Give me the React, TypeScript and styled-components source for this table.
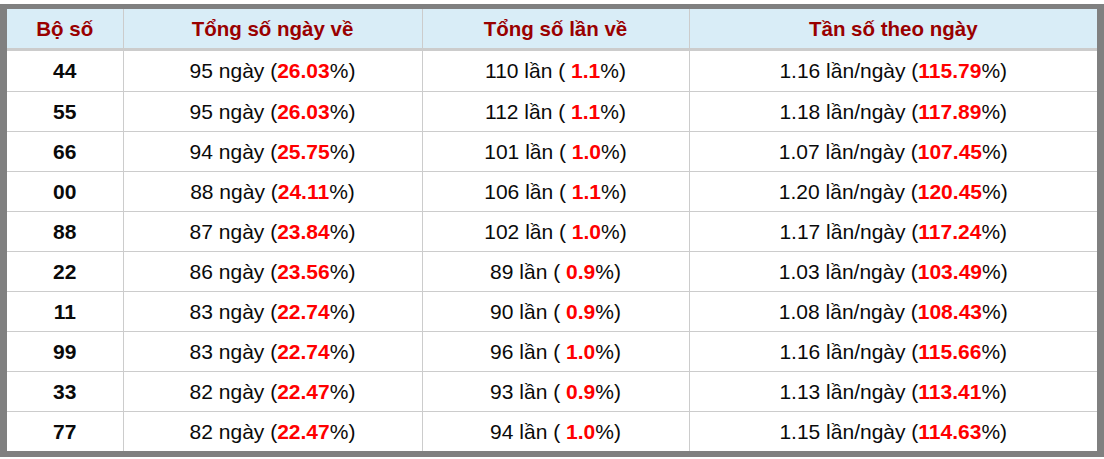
import React from "react";
import styled, { createGlobalStyle } from "styled-components";

const GlobalStyle = createGlobalStyle`
  html, body {
    margin: 0;
    padding: 0;
    background: #fff;
  }
  body {
    font-family: "Liberation Sans", Arial, sans-serif;
  }
`;

type Row = {
  bo: string;
  days: number;
  daysPct: string;
  times: number;
  timesPct: string;
  freq: string;
  freqPct: string;
};

const rows: Row[] = [
  { bo: "44", days: 95, daysPct: "26.03", times: 110, timesPct: "1.1", freq: "1.16", freqPct: "115.79" },
  { bo: "55", days: 95, daysPct: "26.03", times: 112, timesPct: "1.1", freq: "1.18", freqPct: "117.89" },
  { bo: "66", days: 94, daysPct: "25.75", times: 101, timesPct: "1.0", freq: "1.07", freqPct: "107.45" },
  { bo: "00", days: 88, daysPct: "24.11", times: 106, timesPct: "1.1", freq: "1.20", freqPct: "120.45" },
  { bo: "88", days: 87, daysPct: "23.84", times: 102, timesPct: "1.0", freq: "1.17", freqPct: "117.24" },
  { bo: "22", days: 86, daysPct: "23.56", times: 89, timesPct: "0.9", freq: "1.03", freqPct: "103.49" },
  { bo: "11", days: 83, daysPct: "22.74", times: 90, timesPct: "0.9", freq: "1.08", freqPct: "108.43" },
  { bo: "99", days: 83, daysPct: "22.74", times: 96, timesPct: "1.0", freq: "1.16", freqPct: "115.66" },
  { bo: "33", days: 82, daysPct: "22.47", times: 93, timesPct: "0.9", freq: "1.13", freqPct: "113.41" },
  { bo: "77", days: 82, daysPct: "22.47", times: 94, timesPct: "1.0", freq: "1.15", freqPct: "114.63" },
];

const App: React.FC = () => {
  return (
    <>
      <GlobalStyle />
      <Page>
        <Frame>
          <Table>
            <colgroup>
              <col style={{ width: 116 }} />
              <col style={{ width: 299 }} />
              <col style={{ width: 267 }} />
              <col />
            </colgroup>
            <thead>
              <tr>
                <Th>Bộ số</Th>
                <Th>Tổng số ngày về</Th>
                <Th>Tổng số lần về</Th>
                <Th>Tần số theo ngày</Th>
              </tr>
            </thead>
            <tbody>
              {rows.map((r) => (
                <tr key={r.bo}>
                  <Td $bold>{r.bo}</Td>
                  <Td>
                    {r.days} ngày (<Pct>{r.daysPct}</Pct>%)
                  </Td>
                  <Td>
                    {r.times} lần ( <Pct>{r.timesPct}</Pct>%)
                  </Td>
                  <Td>
                    {r.freq} lần/ngày (<Pct>{r.freqPct}</Pct>%)
                  </Td>
                </tr>
              ))}
            </tbody>
          </Table>
        </Frame>
      </Page>
    </>
  );
};

export default App;

const Page = styled.div`
  padding-top: 4px;
  width: 1104px;
`;

const Frame = styled.div`
  border-style: solid;
  border-color: #808080;
  border-width: 5px 7px 6px 7px;
  background: #fff;
`;

const Table = styled.table`
  width: 100%;
  border-collapse: collapse;
  table-layout: fixed;
  font-size: 21px;
  color: #0a0a0a;
`;

const Th = styled.th`
  height: 39px;
  padding: 0;
  background: #d9edf7;
  color: #990000;
  font-weight: bold;
  font-size: 20.5px;
  text-align: center;
  border-left: 1px solid #cccccc;
  border-bottom: 3px solid #cccccc;
  &:first-child {
    border-left: none;
  }
`;

const Td = styled.td<{ $bold?: boolean }>`
  height: 39px;
  padding: 0;
  text-align: center;
  font-weight: ${(p) => (p.$bold ? "bold" : "normal")};
  border-left: 1px solid #cccccc;
  border-top: 1px solid #cccccc;
  &:first-child {
    border-left: none;
  }
  tr:first-child > & {
    border-top: none;
    height: 40px;
  }
`;

const Pct = styled.b`
  color: #ff0000;
`;
